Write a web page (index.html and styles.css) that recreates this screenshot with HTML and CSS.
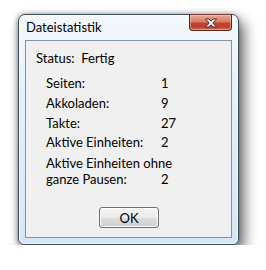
FILE: index.html
```html
<!DOCTYPE html>
<html lang="de">
<head>
  <meta charset="UTF-8">
  <title>Dateistatistik</title>
  <link rel="stylesheet" href="styles.css">
</head>
<body>
  <div class="fenster">
    <div class="titelleiste">
      <span class="titel">Dateistatistik</span>
      <div class="schliessen">
        <svg width="18" height="10" viewBox="0 0 18 10">
          <path d="M3.5 1 L7 1 L9 3.2 L11 1 L14.5 1 L10.8 5 L14.5 9 L11 9 L9 6.8 L7 9 L3.5 9 L7.2 5 Z" fill="#fff" stroke="#4a2a24" stroke-width="1" stroke-linejoin="round"/>
        </svg>
      </div>
    </div>
    <div class="inhalt">
      <p class="status">Status:&nbsp; Fertig</p>
      <div class="werte">
        <span>Seiten:</span><span>1</span>
        <span>Akkoladen:</span><span>9</span>
        <span>Takte:</span><span>27</span>
        <span>Aktive Einheiten:</span><span>2</span>
        <span class="zweizeilig">Aktive Einheiten ohne<br>ganze Pausen:</span><span class="unten">2</span>
      </div>
      <button class="btn-ok">OK</button>
    </div>
  </div>
</body>
</html>
```

FILE: styles.css
```css
body {
  margin: 0;
  padding: 14px 0 0 18px;
  background-color: #fff;
  font-family: Lato, "Open Sans", Arial, sans-serif;
  font-size: 13px;
  color: #000;
}
.fenster {
  width: 219px;
  height: 229px;
  border: 1px solid #3c4a5a;
  border-radius: 7px 7px 6px 6px;
  background: linear-gradient(180deg, #f4f8fc 0%, #e6f0fa 30%, #d4e6f8 100%);
  box-shadow: 5px 7px 14px rgba(0, 0, 0, 0.6), -1px 0 5px rgba(0, 0, 0, 0.35), inset 0 0 0 1px rgba(255, 255, 255, 0.7);
  display: flex;
  flex-direction: column;
}
.titelleiste {
  height: 25px;
  display: flex;
  justify-content: space-between;
  align-items: flex-start;
  padding: 0 6px 0 7px;
}
.titel {
  margin-top: 4px;
  font-size: 13px;
}
.schliessen {
  width: 41px;
  height: 15px;
  margin-top: -1px;
  border: 1px solid #5b2419;
  border-top-color: #7a3b30;
  border-radius: 0 0 4px 4px;
  background: linear-gradient(180deg, #e7a894 0%, #d97a66 45%, #c2432d 55%, #b8422e 80%, #d0735c 100%);
  box-shadow: inset 0 0 0 1px rgba(255, 220, 200, 0.45);
  display: flex;
  justify-content: center;
  align-items: center;
}
.inhalt {
  flex: 1;
  margin: 0 6px 6px 6px;
  border: 1px solid #8592a2;
  background-color: #f0f0f0;
  padding: 10px 0 0 10px;
  display: flex;
  flex-direction: column;
}
.status {
  margin: 0;
  line-height: 15px;
}
.werte {
  display: grid;
  grid-template-columns: 115px auto;
  grid-template-rows: repeat(4, 19.7px) auto;
  align-items: center;
  margin: 8px 0 0 10px;
  line-height: 15px;
}
.werte span {
  white-space: nowrap;
}
.zweizeilig {
  line-height: 16px;
  margin-top: 2px;
}
.unten {
  align-self: end;
  line-height: 16px;
}
.btn-ok {
  width: 60px;
  height: 21px;
  margin: auto 0 9px 63px;
  border: 1px solid #707070;
  border-radius: 3px;
  background: linear-gradient(180deg, #f3f3f3 0%, #ebebeb 50%, #dddddd 51%, #cfcfcf 100%);
  box-shadow: inset 0 0 0 1px #fcfcfc;
  font-family: inherit;
  font-size: 13px;
  padding: 0;
  color: #000;
}
```
